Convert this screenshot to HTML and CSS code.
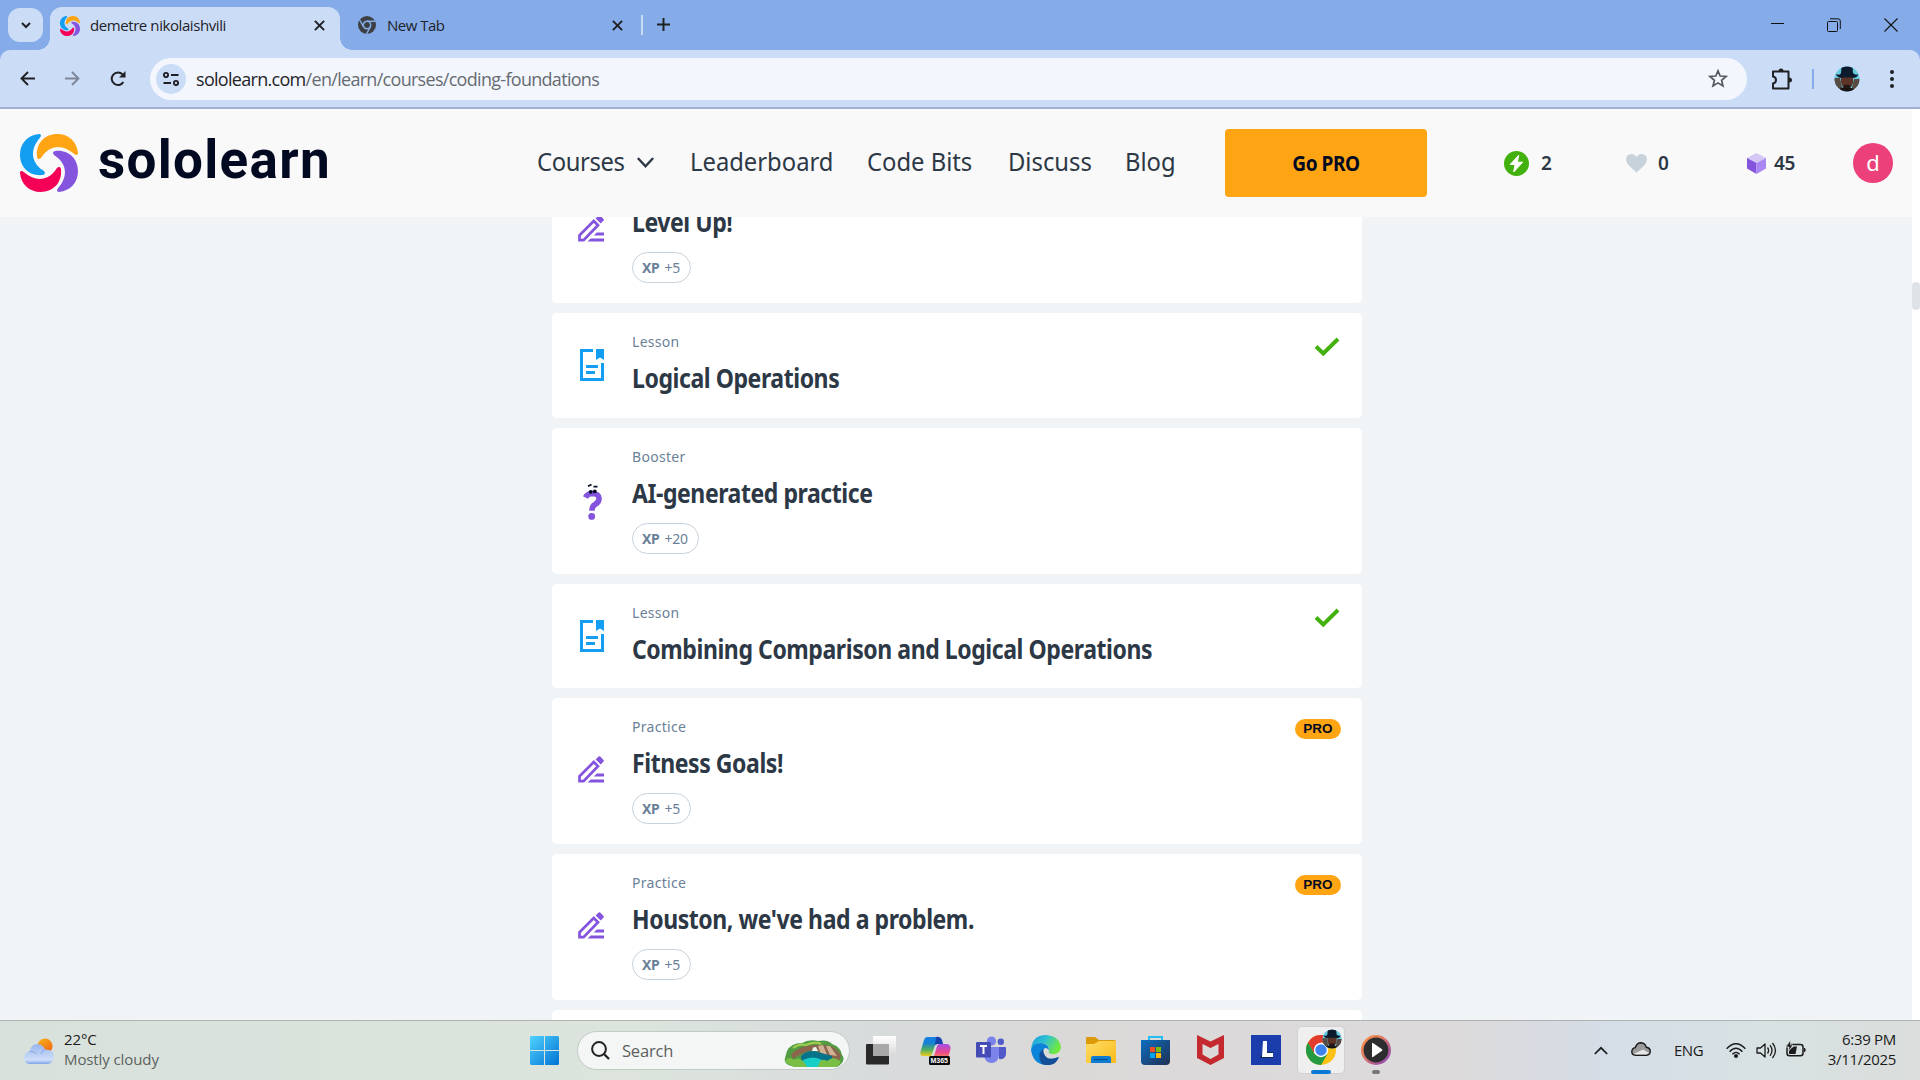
FILE: index.html
```html
<!DOCTYPE html>
<html lang="en">
<head>
<meta charset="utf-8">
<title>Sololearn - Coding Foundations</title>
<link rel="stylesheet" href="styles.css">
</head>
<body>
<svg class="defs" width="0" height="0" aria-hidden="true">
  <defs>
    <path id="petal" d="M51 68C47 27 75 0 112 0C146 0 171 23 174 57C174 64 168 64 163 60C125 27 88 35 65 69C60 77 52 77 51 68Z"/>
    <symbol id="swirl" viewBox="0 0 174 174">
      <use href="#petal" fill="#ffa514"/>
      <use href="#petal" fill="#8454de" transform="rotate(90 87 87)"/>
      <use href="#petal" fill="#f50057" transform="rotate(180 87 87)"/>
      <use href="#petal" fill="#149ef2" transform="rotate(270 87 87)"/>
    </symbol>
    <symbol id="pencil" viewBox="0 0 26 27">
      <path d="M1.5 25.2V20.4L15.8 6L20 10.2L5.6 25.2Z" fill="none" stroke="#8454de" stroke-width="2.7"/>
      <path d="M17.6 3.4L20.5 .4Q21.4 -.2 22.2 .6L25.5 3.9Q26.3 4.8 25.6 5.6L22.7 8.5Z" fill="#8454de"/>
      <path d="M18.8 17.5H26V20.4H15.8ZM12.6 23.6H26V26.6H9.6Z" fill="#8454de"/>
    </symbol>
    <symbol id="lesson" viewBox="0 0 24 32">
      <path d="M13 1.5H1.5V30.5H22.5V14" fill="none" stroke="#149ef2" stroke-width="3"/>
      <path d="M16 0H24V11L20 8.6L16 11Z" fill="#149ef2"/>
      <path d="M6 17.5H18M6 23.5H15" stroke="#149ef2" stroke-width="3"/>
    </symbol>
    <symbol id="check" viewBox="0 0 26 20">
      <path d="M2 9.5L9.3 16.5L24 2" fill="none" stroke="#42b00d" stroke-width="3.9"/>
    </symbol>
    <symbol id="portrait" viewBox="0 0 26 26">
      <clipPath id="round"><circle cx="13" cy="13" r="12.5"/></clipPath>
      <g clip-path="url(#round)">
        <path d="M0 0H26V26H0Z" fill="#65cbdc"/>
        <path d="M0 12H6L9 26H0ZM20 13H26V26H17Z" fill="#574a43"/>
        <path d="M2 8Q6 10 7 7L7.5 1Q13-1 18.5 1L19 7Q22 10 24 8Q24 12 18 12H8Q3 12 2 8Z" fill="#0b1b2d"/>
        <path d="M7 9H19V17Q17 23 13 23Q8 22 7 16Z" fill="#5c3427"/>
        <path d="M7 9H19V11.5H7Z" fill="#0b1b2d"/>
        <path d="M9 20Q13 17 17 20L15 24H10Z" fill="#241817"/>
        <path d="M4 26Q6 20 10 22H17Q21 22 22 26Z" fill="#191313"/>
      </g>
    </symbol>
    <symbol id="close" viewBox="0 0 10 10"><path d="M.8.8L9.2 9.2M9.2.8L.8 9.2" stroke="#202124" stroke-width="1.8"/></symbol>
  </defs>
</svg>

<div class="tabstrip">
  <button class="tab-search"><svg width="10" height="7" viewBox="0 0 10 7"><path d="M1 1L5 5L9 1" fill="none" stroke="#202124" stroke-width="2"/></svg></button>
  <div class="tab tab-active">
    <svg class="favicon" width="20" height="20"><use href="#swirl"/></svg>
    <span class="tab-title">demetre nikolaishvili</span>
    <svg width="11" height="11"><use href="#close"/></svg>
  </div>
  <div class="tab tab-second">
    <svg class="favicon-chrome" width="18" height="18" viewBox="0 0 18 18"><circle cx="9" cy="9" r="9" fill="#3c4043"/><circle cx="9" cy="9" r="3.7" fill="none" stroke="#85ace9" stroke-width="1.5"/><path d="M9 5.2H17M5.6 10.9L1.7 4M12.3 10.9L8.5 18" stroke="#85ace9" stroke-width="1.4"/></svg>
    <span class="tab-title tab-title-new">New Tab</span>
    <svg width="11" height="11"><use href="#close"/></svg>
  </div>
  <span class="tab-divider"></span>
  <svg class="new-tab" width="13" height="13" viewBox="0 0 13 13"><path d="M6.5 0V13M0 6.5H13" stroke="#202124" stroke-width="2"/></svg>
  <div class="window-controls">
    <svg width="13" height="14" viewBox="0 0 13 14"><path d="M0 5.5H13" stroke="#111"/></svg>
    <svg width="14" height="14" viewBox="0 0 14 14"><rect x=".5" y="3.5" width="10" height="10" rx="1" fill="none" stroke="#111"/><path d="M3 .8H11Q13.3.8 13.3 3V11" fill="none" stroke="#111"/></svg>
    <svg width="14" height="14" viewBox="0 0 14 14"><path d="M.5.5L13.5 13.5M13.5.5L.5 13.5" stroke="#111" stroke-width="1.1"/></svg>
  </div>
</div>

<div class="toolbar-back">
<div class="toolbar">
  <svg class="nav-arrow" width="15" height="15" viewBox="0 0 15 15"><path d="M15 7.5H1.5M8 1L1.5 7.5L8 14" fill="none" stroke="#202124" stroke-width="1.9"/></svg>
  <svg class="nav-arrow nav-forward" width="15" height="15" viewBox="0 0 15 15"><path d="M0 7.5H13.5M7 1L13.5 7.5L7 14" fill="none" stroke="#202124" stroke-width="1.9"/></svg>
  <svg class="nav-reload" width="16" height="16" viewBox="0 0 16 16"><path d="M13.4 11A6.3 6.3 0 1 1 12.6 3.4L14.8 5.6" fill="none" stroke="#202124" stroke-width="2"/><path d="M15.5 0V6.5H9Z" fill="#202124"/></svg>
  <div class="omnibox">
    <span class="site-info"><svg width="16" height="14" viewBox="0 0 16 14"><g fill="none" stroke="#202124" stroke-width="1.9"><circle cx="3" cy="3" r="2.1"/><path d="M8 3H15.5M.5 11H8"/><circle cx="13" cy="11" r="2.1"/></g></svg></span>
    <span class="url"><b>sololearn.com</b>/en/learn/courses/coding-foundations</span>
    <svg class="star" width="20" height="19" viewBox="0 0 20 19"><path d="M10 1.8L12.2 7L18 7.5L13.6 11.3L15 17L10 13.9L5 17L6.4 11.3L2 7.5L7.8 7Z" fill="none" stroke="#55595d" stroke-width="1.7"/></svg>
  </div>
  <svg class="extensions" width="22" height="22" viewBox="0 0 22 22"><path d="M2 3.5H17.5V20.5H2V15.5Q5 15 5 12T2 8.5Z" fill="none" stroke="#202124" stroke-width="2" stroke-linejoin="round"/><path d="M7.5 3Q7.5 .5 10 .5T12.5 3ZM18 9.5Q21 9.5 21 12T18 14.5Z" fill="#202124"/></svg>
  <span class="toolbar-divider"></span>
  <svg class="profile" width="26" height="26"><use href="#portrait"/></svg>
  <svg class="menu-dots" width="4" height="18" viewBox="0 0 4 18" fill="#202124"><circle cx="2" cy="2" r="2"/><circle cx="2" cy="9" r="2"/><circle cx="2" cy="16" r="2"/></svg>
</div>
</div>

<div class="viewport">
  <div class="page">
    <header class="site-header">
      <svg class="brand-mark" width="58" height="58"><use href="#swirl"/></svg>
      <span class="brand-name">sololearn</span>
      <nav class="site-nav">
        <a class="nav-courses">Courses</a>
        <svg class="chevron" width="17" height="12" viewBox="0 0 17 12"><path d="M1.5 1.8L8.5 9.3L15.5 1.8" fill="none" stroke="#2d3846" stroke-width="2.4" stroke-linecap="round"/></svg>
        <a class="nav-leaderboard">Leaderboard</a>
        <a class="nav-bits">Code Bits</a>
        <a class="nav-discuss">Discuss</a>
        <a class="nav-blog">Blog</a>
      </nav>
      <button class="go-pro"><span>Go PRO</span></button>
      <div class="stat stat-streak"><svg width="25" height="25" viewBox="0 0 25 25"><circle cx="12.5" cy="12.5" r="12.5" fill="#42b00d"/><path d="M14.8 4L6.2 13.5H11L9.7 21L18.7 11.2H13.4Z" fill="#fff" stroke="#fff" stroke-linejoin="round"/></svg><span>2</span></div>
      <div class="stat stat-hearts"><svg width="21" height="19" viewBox="0 0 21 19"><path d="M10.5 18.7Q7.5 15.6 3.6 12.2Q0 8.8 0 5.2Q.4.4 5.2 0Q8.7 0 10.5 3.2Q12.4 0 15.8 0Q20.6.4 21 5.2Q21 8.8 17.4 12.2Q13.5 15.6 10.5 18.7Z" fill="#c8d2db"/></svg><span>0</span></div>
      <div class="stat stat-bits"><svg width="19" height="21" viewBox="0 0 19 21"><path d="M9.5 0L19 5L9.5 10L0 5Z" fill="#d4c7f5"/><path d="M0 5L9.5 10V21L0 15.5Z" fill="#8454de"/><path d="M19 5L9.5 10V21L19 15.5Z" fill="#aa87f2"/></svg><span>45</span></div>
      <span class="user-badge">d</span>
    </header>
    <main class="lesson-area">
      <div class="lesson-list">
        <article class="card card-tall">
          <span class="card-icon"><svg class="pen" width="26" height="27"><use href="#pencil"/></svg></span>
          <div class="card-body"><p class="kind"></p><h3>Level Up!</h3><span class="xp"><b>XP</b> +5</span></div>
        </article>
        <article class="card">
          <span class="card-icon"><svg width="24" height="32"><use href="#lesson"/></svg></span>
          <div class="card-body"><p class="kind">Lesson</p><h3>Logical Operations</h3></div>
          <svg class="done" width="26" height="20"><use href="#check"/></svg>
        </article>
        <article class="card card-tall">
          <span class="card-icon"><svg class="question" width="22" height="37" viewBox="0 0 22 37"><path d="M3.5 14.5Q5.5 10.5 10.5 10.5Q17.5 11 17 16Q16.7 19.5 13 21.5Q10 23 10 27.8" fill="none" stroke="#8454de" stroke-width="5.6"/><circle cx="9.7" cy="33.4" r="3.4" fill="#8454de"/><circle cx="8.7" cy="8.8" r="1.9" fill="#020a22"/><circle cx="12.8" cy="8.4" r="1.9" fill="#020a22"/><path d="M6 3.2L9.5 1.5M11.5 3.7H15.5" stroke="#020a22" stroke-width="1.8"/></svg></span>
          <div class="card-body"><p class="kind">Booster</p><h3>AI-generated practice</h3><span class="xp xp-wide"><b>XP</b> +20</span></div>
        </article>
        <article class="card">
          <span class="card-icon"><svg width="24" height="32"><use href="#lesson"/></svg></span>
          <div class="card-body"><p class="kind">Lesson</p><h3>Combining Comparison and Logical Operations</h3></div>
          <svg class="done" width="26" height="20"><use href="#check"/></svg>
        </article>
        <article class="card card-tall">
          <span class="card-icon"><svg class="pen" width="26" height="27"><use href="#pencil"/></svg></span>
          <div class="card-body"><p class="kind">Practice</p><h3>Fitness Goals!</h3><span class="xp"><b>XP</b> +5</span></div>
          <span class="pro">PRO</span>
        </article>
        <article class="card card-tall">
          <span class="card-icon"><svg class="pen" width="26" height="27"><use href="#pencil"/></svg></span>
          <div class="card-body"><p class="kind">Practice</p><h3>Houston, we've had a problem.</h3><span class="xp"><b>XP</b> +5</span></div>
          <span class="pro">PRO</span>
        </article>
        <article class="card"></article>
      </div>
    </main>
  </div>
  <div class="scrollbar"><div class="thumb"></div></div>
</div>

<footer class="taskbar">
  <div class="weather">
    <svg width="30" height="26" viewBox="0 0 30 26"><defs><linearGradient id="sun" x1="0" y1="0" x2=".6" y2="1"><stop stop-color="#f5b41d"/><stop offset="1" stop-color="#f26a12"/></linearGradient><linearGradient id="cloud" x1="0" y1="0" x2="0" y2="1"><stop stop-color="#98b5ee"/><stop offset=".8" stop-color="#d0dff9"/><stop offset="1" stop-color="#7ea4ea"/></linearGradient></defs><circle cx="21" cy="8" r="7.6" fill="url(#sun)"/><path d="M6 26Q0 25.5 0 19.5Q.5 14 5.5 13.3Q7.5 6 13.5 6Q19 6.3 21 11.5Q29.5 11 30 18.8Q29.5 25.5 24 26Z" fill="url(#cloud)"/><path d="M5.5 13.5Q10 13 12.5 16M17 16Q18 12.5 21 11.5" fill="none" stroke="#6f94dc" opacity=".7"/></svg>
    <div class="weather-text"><span>22°C</span><span class="muted">Mostly cloudy</span></div>
  </div>
  <div class="dock">
    <svg class="start" width="29" height="29" viewBox="0 0 29 29"><defs><linearGradient id="win" x1="0" y1="0" x2="1" y2="1"><stop stop-color="#50d3ff"/><stop offset="1" stop-color="#0072d2"/></linearGradient></defs><path d="M1 0H14V14H0V1ZM15 0H28L29 1V14H15ZM0 15H14V29H1L0 28ZM15 15H29V28L28 29H15Z" fill="url(#win)"/></svg>
    <div class="search-box">
      <svg width="19" height="19" viewBox="0 0 19 19"><circle cx="8" cy="8" r="6.9" fill="none" stroke="#222" stroke-width="2"/><path d="M13 13L18 18" stroke="#222" stroke-width="2.3"/></svg>
      <span>Search</span>
      <svg class="search-art" width="60" height="28" viewBox="0 0 60 28"><path d="M3 11Q7 3 18 3Q25-1 34 1Q44-1 48 4Q57 7 58 15Q62 20 56 25L53 27H14Q-1 26 1 18Z" fill="#529d43"/><path d="M7 14Q18 4 34 5Q50 3 57 15L55 22Q48 17 42 15L30 10Q18 12 9 19Z" fill="#8b654c"/><path d="M34 6L39 5L43 15L37 14ZM42 6L46 6L53 16L46 15Z" fill="#d2b294"/><path d="M17 16Q24 9 34 12L48 16V22L42 27H18Z" fill="#07738b"/><path d="M19 20Q29 15 38 20L36 27H20Z" fill="#17cfc6"/><path d="M1 22Q4 15 10 20Q15 16 20 22L23 27H10ZM34 27Q36 17 43 21Q50 15 57 22L53 27Z" fill="#79bf45"/><path d="M9 8Q16 3 22 5Q31 1 37 4" fill="none" stroke="#a3ce51" stroke-width="2"/><path d="M29 7.5L32 7L34 11H28Z" fill="#eef6f1"/></svg>
    </div>
    <div class="apps">
      <span class="app"><svg width="30" height="29" viewBox="0 0 30 29"><defs><linearGradient id="pane" x1="0" y1="0" x2="0" y2="1"><stop stop-color="#fff"/><stop offset="1" stop-color="#d8d8d8"/></linearGradient></defs><rect y="8" width="23" height="20.5" rx="1" fill="#292929"/><rect x="7" width="23" height="20" rx="1" fill="url(#pane)"/><path d="M7 8H23V20H8Q7 20 7 19Z" fill="#a8a8a8"/></svg></span>
      <span class="app"><svg width="31" height="29" viewBox="0 0 31 29"><defs><linearGradient id="cpa" x1="0" y1="0" x2="0" y2="1"><stop stop-color="#1483e6"/><stop offset=".3" stop-color="#167fd4"/><stop offset=".65" stop-color="#4ead64"/><stop offset="1" stop-color="#f1ce18"/></linearGradient><linearGradient id="cpb" x1="0" y1="0" x2="0" y2="1"><stop stop-color="#a44ce9"/><stop offset=".6" stop-color="#ed4b8b"/><stop offset="1" stop-color="#fb8a56"/></linearGradient></defs><path d="M7 1H17Q21 1 23 8H18Q15 8 14 12L12 18Q11 21 8 20H3Q-1 20 1 14L4 4Q5 1 7 1Z" fill="url(#cpa)"/><path d="M16 1Q20 0 22 4L23 8H18Q15 8 15 9Z" fill="#1842ac"/><path d="M20 8H26Q32 8 30 15L28 22H10Q14 22 15 17L17 10Q18 8 20 8Z" fill="url(#cpb)"/><rect x="9" y="20" width="21" height="9" rx="1.5" fill="#080808"/><text x="10.5" y="27.3" class="m365">M365</text></svg></span>
      <span class="app"><svg width="30" height="28" viewBox="0 0 30 28"><circle cx="15.5" cy="5" r="4.6" fill="#7b83eb"/><circle cx="24.8" cy="5.8" r="3.2" fill="#5059c9"/><path d="M22 11H29Q30 11 30 12V18Q29.5 24 23 23Z" fill="#5059c9"/><path d="M8 11H23V19Q22 27 15.5 27T8 19Z" fill="#7b83eb"/><rect y="6" width="15" height="15.5" rx="1.2" fill="#454cb5"/><path d="M4 10H11M7.5 10V18" stroke="#fff" stroke-width="2"/></svg></span>
      <span class="app"><svg width="30" height="30" viewBox="0 0 30 30"><defs><linearGradient id="edge" x1="0" y1="0" x2="1" y2=".4"><stop stop-color="#129bde"/><stop offset=".5" stop-color="#30c1d2"/><stop offset="1" stop-color="#70e83f"/></linearGradient></defs><path d="M0 15Q1 0 15 0Q29 1 30 13Q28 20 21 19Q17 19 18 16Q19 9 11 8Q4 8 0 15Z" fill="url(#edge)"/><path d="M0 15Q2 8 10 8Q18 9 18 15Q13 10 12 17Q13 28 28 22Q24 30 15 30Q2 29 0 15Z" fill="#0b83d8"/><path d="M12 14Q5 20 11 29Q24 33 28 22Q13 28 12 14Z" fill="#154e98"/></svg></span>
      <span class="app"><svg width="30" height="28" viewBox="0 0 30 28"><defs><linearGradient id="fold" x1="0" y1="0" x2="1" y2="1"><stop stop-color="#ffdc69"/><stop offset="1" stop-color="#f9ba16"/></linearGradient></defs><path d="M0 2Q0 1 1 1H9L13 4H28Q30 4 30 6V20H0Z" fill="#dc9a08"/><path d="M0 8H8L13 5H29Q30 5 30 6V26Q30 27 29 27H1Q0 27 0 26Z" fill="url(#fold)"/><path d="M5 27V22Q5 20 7 20H23Q25 20 25 22V27Z" fill="#0e7cd1"/><path d="M8 23.5H22" stroke="#084f91" stroke-width="1.2"/></svg></span>
      <span class="app"><svg width="29" height="30" viewBox="0 0 29 30"><defs><linearGradient id="store" x1="0" y1="0" x2="1" y2="1"><stop stop-color="#0d6fc2"/><stop offset="1" stop-color="#202f51"/></linearGradient></defs><path d="M8 7V2H21V7" fill="none" stroke="#25bdf2" stroke-width="2"/><path d="M0 5H29V26Q29 30 25 30H4Q0 30 0 26Z" fill="url(#store)"/><path d="M9 12H14V17H9Z" fill="#f25022"/><path d="M15 12H20V17H15Z" fill="#7fba00"/><path d="M9 18H14V23H9Z" fill="#00a4ef"/><path d="M15 18H20V23H15Z" fill="#ffb900"/></svg></span>
      <span class="app"><svg width="27" height="30" viewBox="0 0 27 30"><path d="M0 0L13.5 6.5L27 0V23L13.5 30L0 23ZM5.5 9V19.5L13.5 24L21.5 19.5V9L13.5 13Z" fill="#c3292e" fill-rule="evenodd"/></svg></span>
      <span class="app"><svg width="30" height="30" viewBox="0 0 30 30"><path d="M0 0H30V30H0Z" fill="#1b3dab"/><path d="M9 23L12 17H22V23Z" fill="#0b2850"/><path d="M12 6H16V18H22V22H11Z" fill="#fff"/></svg></span>
      <span class="app app-current"><svg class="chrome-logo" width="30" height="30" viewBox="0 0 30 30"><circle cx="15" cy="15" r="15" fill="#fbc116"/><path d="M2 7.5A15 15 0 0 1 28 7.5H15L8 18Z" fill="#e33b2e"/><path d="M2 7.5A15 15 0 0 0 15 30L21.5 18.8L8.5 18.8Z" fill="#249a41"/><circle cx="15" cy="15" r="7.2" fill="#fff"/><circle cx="15" cy="15" r="5.7" fill="#3d82ed"/></svg><svg class="chrome-user" width="20" height="20"><use href="#portrait"/></svg><i class="run-bar"></i></span>
      <span class="app app-player"><svg width="30" height="30" viewBox="0 0 30 30"><defs><linearGradient id="ring" x1="0" y1="0" x2="1" y2="1"><stop stop-color="#fb9340"/><stop offset=".45" stop-color="#d87568"/><stop offset="1" stop-color="#8a44c2"/></linearGradient></defs><circle cx="15" cy="15" r="13.7" fill="#2d2d2f" stroke="url(#ring)" stroke-width="2.6"/><path d="M11 8.5Q11 7.5 12 8L21 14.2Q22 15 21 15.8L12 22Q11 22.5 11 21.5Z" fill="#fff"/></svg><i class="run-dot"></i></span>
    </div>
  </div>
  <div class="tray">
    <svg class="tray-up" width="14" height="9" viewBox="0 0 14 9"><path d="M.8 8L7 1.8L13.2 8" fill="none" stroke="#1b1b1b" stroke-width="1.7"/></svg>
    <svg class="tray-cloud" width="20" height="14" viewBox="0 0 20 14"><path d="M4.5 13.3Q.8 13 .8 9.8Q.9 6.2 4.3 5.6Q6 .7 10 .7Q14 .9 15.3 5.2Q19.3 5.8 19.3 9.5Q19 13 15.5 13.3Z" fill="#9b9b9b" stroke="#1a1a1a" stroke-width="1.4"/><path d="M2.5 12L12 7.5L18 11L15.5 12.6H5Z" fill="#e6e6e6"/></svg>
    <span class="lang">ENG</span>
    <svg class="wifi" width="20" height="15" viewBox="0 0 20 15"><g fill="none" stroke="#1b1b1b" stroke-width="1.4"><path d="M.6 5.8Q10-4.2 19.4 5.8"/><path d="M3.6 8.7Q10 1.7 16.4 8.7"/><path d="M6.4 11.3Q10 7.4 13.6 11.3"/></g><circle cx="10" cy="13" r="2" fill="#1b1b1b"/></svg>
    <svg class="volume" width="21" height="17" viewBox="0 0 21 17"><g fill="none" stroke="#1b1b1b" stroke-width="1.3"><path d="M1 6V11H4.5L9 15V2L4.5 6Z" stroke-linejoin="round"/><path d="M11.5 5.5Q13.7 8.5 11.5 11.5M14 3.2Q18 8.5 14 13.8M16.5 1Q22.5 8.5 16.5 16"/></g></svg>
    <svg class="battery" width="21" height="17" viewBox="0 0 21 17"><rect x="1" y="4.5" width="16" height="11.3" rx="2.5" fill="none" stroke="#1b1b1b" stroke-width="1.5"/><path d="M3 14V10L8 6.5H11L9.5 14ZM18 8H19Q20.5 10 19 12H18Z" fill="#1b1b1b"/><path d="M4.5 0L0 7H3L2.5 11.5L7 5H4.5Z" fill="#1b1b1b" stroke="#dce3e5" stroke-width=".7"/></svg>
    <div class="clock"><span>6:39 PM</span><span>3/11/2025</span></div>
  </div>
</footer>
</body>
</html>
```
FILE: styles.css
```css
* { box-sizing: border-box; }
html, body { margin: 0; height: 100%; }
body {
  display: flex;
  flex-direction: column;
  width: 1920px;
  height: 1080px;
  overflow: hidden;
  background: #f0f4f7;
  color: #2d3846;
  font-family: "Noto Sans", sans-serif;
}
svg { display: block; flex: none; }
button { border: 0; padding: 0; font: inherit; }
.defs { position: absolute; }

/* browser tabs */
.tabstrip {
  display: flex;
  flex: none;
  height: 50px;
  padding: 0 22px 0 8px;
  background: #85ace9;
  font: 15px/20px "Open Sans", sans-serif;
  color: #1f2329;
}
.tab-search {
  display: grid;
  place-items: center;
  width: 35px;
  height: 34px;
  margin-top: 8px;
  border-radius: 12px;
  background: #cbdcf7;
}
.tab { display: flex; align-items: center; white-space: nowrap; }
.tab-active {
  position: relative;
  width: 290px;
  height: 43px;
  margin: 7px 0 0 7px;
  padding: 0 15px 6px 10px;
  border-radius: 12px 12px 0 0;
  background: #cbdcf7;
}
.tab-active::before, .tab-active::after {
  content: "";
  position: absolute;
  bottom: 0;
  width: 12px;
  height: 12px;
}
.tab-active::before { left: -12px; background: radial-gradient(circle at 0 0, transparent 11.5px, #cbdcf7 12px); }
.tab-active::after { right: -12px; background: radial-gradient(circle at 100% 0, transparent 11.5px, #cbdcf7 12px); }
.favicon { margin-right: 10px; }
.tab-title { width: 224px; margin-top: -1px; letter-spacing: -.42px; }
.tab-second { width: 301px; padding-left: 18px; }
.favicon-chrome { margin-right: 11px; }
.tab-title-new { width: 225px; letter-spacing: -.5px; }
.tab-divider { width: 2px; height: 20px; margin-top: 15px; background: #cbdcf7; }
.new-tab { margin: 18px 0 0 14px; }
.window-controls { display: flex; gap: 43px; margin: 18px 0 0 auto; }

/* address row */
.toolbar-back { flex: none; background: #85ace9; }
.toolbar {
  display: flex;
  align-items: center;
  height: 59px;
  padding: 0 26px 0 20px;
  border-bottom: 2px solid #a0afcf;
  border-radius: 10px 10px 0 0;
  background: #cbdcf7;
}
.nav-forward { margin-left: 30px; opacity: .45; }
.nav-reload { margin: 0 24px 0 30px; }
.omnibox {
  display: flex;
  align-items: center;
  width: 1597px;
  height: 42px;
  padding: 0 19px 0 6px;
  border-radius: 21px;
  background: #f3f7fd;
}
.site-info {
  display: grid;
  place-items: center;
  width: 30px;
  height: 30px;
  margin-right: 10px;
  border-radius: 50%;
  background: #cbdcf7;
}
.url { font: 18px/24px "Open Sans", sans-serif; letter-spacing: -.7px; color: #666b72; }
.url b { font-weight: 400; color: #1f2329; }
.star { margin-left: auto; }
.extensions { margin-left: 24px; }
.toolbar-divider { width: 2px; height: 20px; margin: 0 20px 0 19px; background: #85ace9; }
.menu-dots { margin-left: 30px; }

/* page */
.viewport { display: flex; flex: none; height: 911px; }
.page { width: 1912px; overflow: hidden; }
.site-header {
  display: flex;
  align-items: center;
  height: 108px;
  padding-left: 20px;
  background: #f9f9f9;
}
.brand-name {
  width: 439px;
  margin: -7px 0 0 20px;
  font: 700 53px/60px Roboto, sans-serif;
  letter-spacing: 1.3px;
  color: #020a22;
}
.site-nav {
  display: flex;
  align-items: center;
  font-size: 26px;
  line-height: 34px;
  white-space: nowrap;
}
.site-nav a { margin-top: -4px; transform: scaleX(.915); transform-origin: left; }
.nav-courses { width: 100px; letter-spacing: -.4px; }
.chevron { margin-right: 36px; }
.nav-leaderboard { width: 177px; }
.nav-bits { width: 141px; }
.nav-discuss { width: 117px; }
.nav-blog { width: 100px; }
.go-pro {
  width: 202px;
  height: 68px;
  border-radius: 4px;
  background: #ffa514;
  color: #020a22;
  font: 700 20.5px/28px "Noto Sans", sans-serif;
  letter-spacing: -.5px;
}
.go-pro span { display: block; transform: scaleX(.93); }
.stat { display: flex; align-items: center; font-size: 19px; font-weight: 600; letter-spacing: -.3px; }
.stat span { margin-top: -1px; }
.stat-streak { width: 122px; margin-left: 77px; gap: 12px; }
.stat-hearts { width: 121px; gap: 11px; }
.stat-bits { width: 106px; gap: 8px; }
.user-badge {
  width: 40px;
  height: 40px;
  border-radius: 50%;
  background: #ec407a;
  color: #fff;
  font-size: 22px;
  line-height: 39px;
  text-align: center;
}
.lesson-area { height: 803px; overflow: hidden; }
.lesson-list {
  display: flex;
  flex-direction: column;
  gap: 10px;
  width: 810px;
  margin: -60px 0 0 552px;
}
.card {
  display: flex;
  flex: none;
  height: 104.6px;
  padding: 20px 20px 0 24px;
  border-radius: 5px;
  background: #fff;
}
.card-tall { height: 146px; }
.card-icon {
  display: grid;
  place-items: center;
  width: 32px;
  height: 100%;
  margin: -10px 24px 0 0;
}
.pen { margin: -3px 2px 0 0; }
.question { margin: 1px 0 0 2px; }
.card-body { flex: 1; white-space: nowrap; }
.kind { height: 18px; margin: 0; font-size: 14px; line-height: 18px; letter-spacing: .3px; color: #6b7f99; }
h3 {
  margin: 9px 0 11px;
  font-size: 26px;
  font-weight: 700;
  line-height: 37px;
  letter-spacing: -.5px;
  transform: scaleX(.886);
  transform-origin: left;
}
.xp {
  display: flex;
  align-items: center;
  gap: 5px;
  width: 59px;
  height: 31px;
  padding-left: 9px;
  border: 1px solid #c8d2db;
  border-radius: 16px;
  font-size: 14px;
  color: #6b7f99;
  letter-spacing: -.3px;
}
.xp-wide { width: 67px; }
.done { margin: 4px 2px 0 0; }
.pro {
  width: 46px;
  height: 20px;
  margin: 1px 1px 0 0;
  border-radius: 10px;
  background: #ffa514;
  color: #020a22;
  font: 700 13.5px/20px "Liberation Sans", sans-serif;
  text-align: center;
}
.scrollbar { width: 8px; padding-top: 173px; background: #fff; }
.thumb { height: 28px; border-radius: 4px; background: #dfe3e8; }

/* desktop taskbar */
.taskbar {
  display: flex;
  flex: none;
  height: 60px;
  border-top: 1px solid #aeb4b1;
  background: linear-gradient(90deg, #d9e1dc 0, #dce4dd 33%, #d8dbdc 46%, #dbd9d8 55%, #dcdadb 76%, #d5dde7 84%, #d8e2e3 92%, #dadddb 100%);
  color: #1b1b1b;
  font: 15px/20px "Open Sans", sans-serif;
}
.weather { display: flex; width: 530px; padding: 17px 0 0 24px; gap: 10px; }
.weather-text { display: flex; flex-direction: column; margin-top: -9px; letter-spacing: -.1px; }
.muted { color: #5c625e; }
.dock { display: flex; align-items: center; width: 1064px; padding-bottom: 1px; }
.start { margin-right: 18px; }
.search-box {
  display: flex;
  align-items: center;
  width: 273px;
  height: 39px;
  margin-right: 3px;
  padding: 0 5px 0 13px;
  border: 1px solid #c2cac6;
  border-radius: 20px;
  background: #f4f6f5;
  color: #5c5f5e;
  font-size: 16.5px;
  letter-spacing: -.2px;
}
.search-box span { margin: 1px 0 0 12px; }
.search-art { margin: 7px 0 0 auto; }
.apps { display: flex; }
.app { position: relative; display: grid; place-items: center; width: 55px; height: 58px; }
.app-current::before {
  content: "";
  position: absolute;
  inset: 5px 3px 5px 4px;
  border: 1px solid #d2d0d0;
  border-radius: 5px;
  background: #f0efef;
}
.chrome-logo { position: relative; }
.chrome-user { position: absolute; left: 29px; top: 8px; }
.run-bar, .run-dot { position: absolute; bottom: 5px; height: 4px; border-radius: 2px; }
.run-bar { width: 20px; background: #0b78d6; }
.run-dot { width: 8px; background: #777; }
.m365 { font: 700 7px "Liberation Sans", sans-serif; fill: #fff; }
.tray { display: flex; align-items: center; width: 302px; padding-bottom: 1px; }
.tray-cloud { margin: -2px 23px 0 23px; }
.lang { width: 52px; margin-top: -1px; letter-spacing: -.5px; }
.volume { margin: 0 9px 0 10px; }
.battery { margin-top: -3px; }
.clock { display: flex; flex-direction: column; flex: 1; align-items: flex-end; letter-spacing: -.3px; margin-bottom: 2px; }
```
